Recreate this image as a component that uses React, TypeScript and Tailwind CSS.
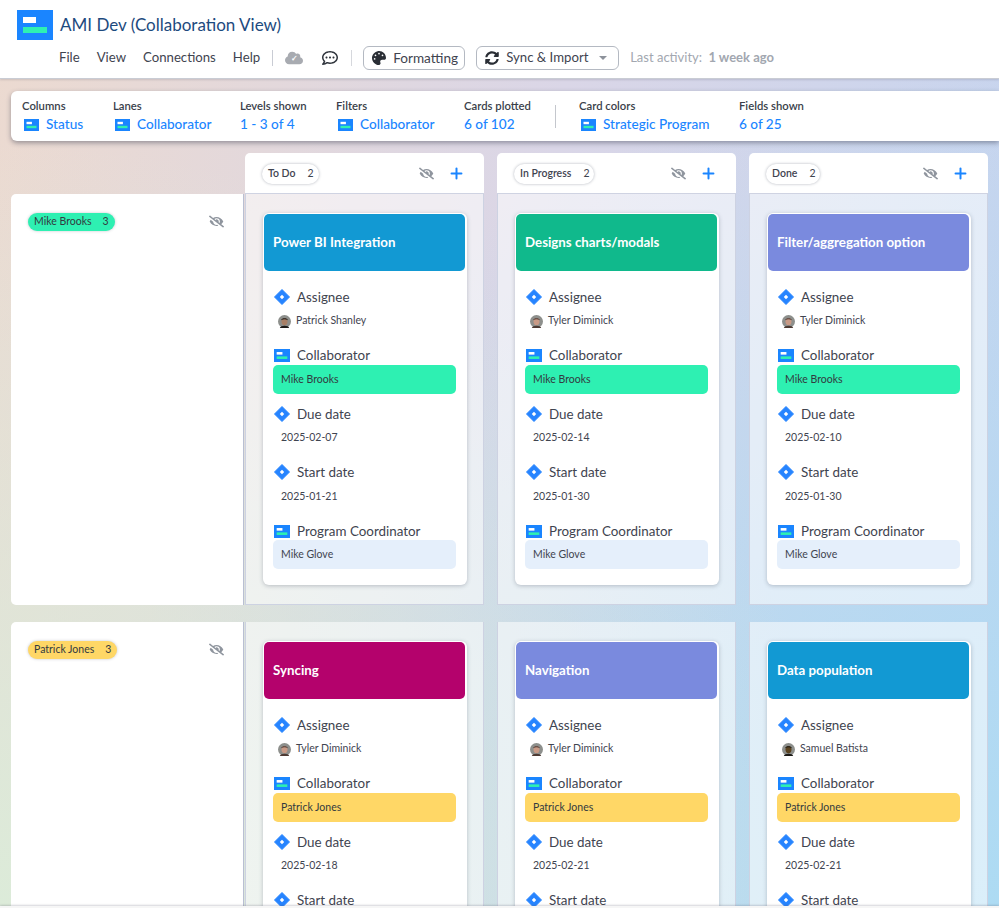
import { Plus } from "lucide-react";
import { FaPalette, FaSyncAlt, FaRegCommentDots, FaCloud, FaEyeSlash } from "react-icons/fa";

// ─── icons ───────────────────────────────────────────────

function BoardIcon({ className }: { className: string }) {
  return (
    <svg className={className} viewBox="0 0 36 30" preserveAspectRatio="none">
      <rect width="36" height="30" fill="#1a85ff" />
      <rect x="6" y="7" width="13" height="6" fill="#fff" />
      <rect x="6" y="17" width="24" height="6" fill="#2ef0b2" />
    </svg>
  );
}

function Diamond() {
  return (
    <svg className="w-[16px] h-[16px] shrink-0" viewBox="0 0 16 16">
      <path d="M8 0.5 15.5 8 8 15.5 0.5 8Z" fill="#2684ff" stroke="#2684ff" strokeLinejoin="round" />
      <path d="M8 5.8 10.2 8 8 10.2 5.8 8Z" fill="#fff" />
    </svg>
  );
}

function Avatar({ skin, hair }: { skin: string; hair: string }) {
  return (
    <svg className="w-[13px] h-[13px] shrink-0" viewBox="0 0 13 13">
      <circle cx="6.5" cy="6.5" r="6.5" fill="#8d8f8c" />
      <ellipse cx="6.5" cy="6.6" rx="3" ry="3.6" fill={skin} />
      <path d="M3.2 5.2C3.4 2.6 9.6 2.6 9.8 5.2 8 4 5 4 3.2 5.2Z" fill={hair} />
      <path d="M1.8 13C2.5 10 10.5 10 11.2 13Z" fill={hair} />
    </svg>
  );
}

// ─── data ────────────────────────────────────────────────

interface CardData {
  title: string;
  color: string;
  assignee: string;
  skin: string;
  hair: string;
  due: string;
  start: string;
}

const tyler = { assignee: "Tyler Diminick", skin: "#c99a86", hair: "#4d3a33" };
const patrick = { assignee: "Patrick Shanley", skin: "#a87f66", hair: "#1d1a18" };
const samuel = { assignee: "Samuel Batista", skin: "#5b4320", hair: "#1c1a16" };

const lanes: { name: string; pill: string; cards: CardData[] }[] = [
  {
    name: "Mike Brooks",
    pill: "bg-[#2ef0b2]",
    cards: [
      { title: "Power BI Integration", color: "bg-[#1299d3]", ...patrick, due: "2025-02-07", start: "2025-01-21" },
      { title: "Designs charts/modals", color: "bg-[#10b98c]", ...tyler, due: "2025-02-14", start: "2025-01-30" },
      { title: "Filter/aggregation option", color: "bg-[#7a8ade]", ...tyler, due: "2025-02-10", start: "2025-01-30" },
    ],
  },
  {
    name: "Patrick Jones",
    pill: "bg-[#ffd766]",
    cards: [
      { title: "Syncing", color: "bg-[#b4026c]", ...tyler, due: "2025-02-18", start: "2025-01-30" },
      { title: "Navigation", color: "bg-[#7a8ade]", ...tyler, due: "2025-02-21", start: "2025-01-30" },
      { title: "Data population", color: "bg-[#1299d3]", ...samuel, due: "2025-02-21", start: "2025-01-30" },
    ],
  },
];

const columns = ["To Do", "In Progress", "Done"];

// ─── card ────────────────────────────────────────────────

function Label({ text, board }: { text: string; board?: boolean }) {
  return (
    <div className="flex items-center h-[20px] gap-[7px] pl-[1px] text-[13.4px] text-[#3f4450]">
      {board ? <BoardIcon className="w-[16px] h-[13px] shrink-0" /> : <Diamond />}
      <span>{text}</span>
    </div>
  );
}

function Card({ card, lane, pill }: { card: CardData; lane: string; pill: string }) {
  return (
    <div className="w-[204px] rounded-[6px] bg-white pt-[1px] pl-[1px] shadow-[0_1px_4px_rgba(60,70,90,0.3)]">
      <div className={`${card.color} h-[57px] w-[201px] rounded-[5px] flex items-center pl-[9px] text-[13.3px] font-bold text-white`}>
        {card.title}
      </div>
      <div className="pt-[16px] pb-[16px] pl-[9px] pr-[11px] flex flex-col gap-[10px]">
        <div>
          <Label text="Assignee" />
          <div className="flex items-center h-[28px] gap-[5px] pl-[5px] text-[10.5px] text-[#3f4450]">
            <Avatar skin={card.skin} hair={card.hair} />
            <span>{card.assignee}</span>
          </div>
        </div>
        <div>
          <Label text="Collaborator" board />
          <div className={`${pill} flex items-center h-[29px] rounded-[5px] pl-[8px] text-[10.5px] text-[#333a40]`}>{lane}</div>
        </div>
        <div>
          <Label text="Due date" />
          <div className="flex items-center h-[28px] pl-[8px] text-[10.5px] text-[#3f4450]">{card.due}</div>
        </div>
        <div>
          <Label text="Start date" />
          <div className="flex items-center h-[29px] pl-[8px] text-[10.5px] text-[#3f4450]">{card.start}</div>
        </div>
        <div>
          <Label text="Program Coordinator" board />
          <div className="-mt-[1px] flex items-center h-[29px] rounded-[5px] pl-[8px] bg-[#e5effb] text-[10.5px] text-[#3f4450]">Mike Glove</div>
        </div>
      </div>
    </div>
  );
}

// ─── toolbar item ────────────────────────────────────────

function Stat({ label, value, board, width }: { label: string; value: string; board?: boolean; width: string }) {
  return (
    <div className={`${width} shrink-0`}>
      <div className="text-[11.3px] font-semibold leading-[15px] text-[#3a3f4a]">{label}</div>
      <div className="flex items-center h-[20px] mt-[2px] gap-[7px] text-[13.6px] font-medium text-[#1a85ff]">
        {board && <BoardIcon className="ml-[2px] w-[15px] h-[12px] shrink-0" />}
        <span>{value}</span>
      </div>
    </div>
  );
}

export default function App() {
  return (
    <div
      className="relative h-[908px] w-[999px] overflow-hidden bg-[radial-gradient(ellipse_at_0%_100%,#dcebd9,transparent_60%),radial-gradient(ellipse_at_100%_100%,#addbf3,transparent_65%),linear-gradient(100deg,#ecdad0,#dad6e7_50%,#c3d4f0)] font-['Lato','Noto_Sans',sans-serif]"
    >
      <header className="h-[79px] bg-white border-b border-[#c9ccd4] shadow-[0_1px_2px_rgba(80,80,100,0.2)]">
        <div className="flex items-center pl-[17px] pt-[10px] gap-[7px]">
          <BoardIcon className="w-[36px] h-[30px]" />
          <h1 className="text-[17px] leading-[30px] text-[#1d4a7e]">AMI Dev (Collaboration View)</h1>
        </div>
        <div className="flex items-center h-[24px] mt-[6px] pl-[59px] text-[13.2px] text-[#3f4450] whitespace-nowrap">
          <span>File</span>
          <span className="ml-[17px]">View</span>
          <span className="ml-[17px]">Connections</span>
          <span className="ml-[17px]">Help</span>
          <span className="ml-[12px] h-[16px] w-px bg-[#c9ccd4]" />
          <span className="relative ml-[12px] flex items-center">
            <FaCloud className="text-[18px] text-[#a8abb1]" />
            <span className="absolute left-[6px] top-[5px] text-[8px] leading-[8px] font-bold text-white">✓</span>
          </span>
          <FaRegCommentDots className="ml-[19px] text-[16px] text-[#2f343c]" />
          <span className="ml-[13px] h-[16px] w-px bg-[#d6d8dd]" />
          <div className="ml-[11px] flex items-center h-[24px] w-[102px] shrink-0 rounded-[6px] border border-[#b4b9c2] pl-[8px] gap-[7px]">
            <FaPalette className="text-[14px] text-[#2a2e35]" />
            <span className="text-[13.6px]">Formatting</span>
          </div>
          <div className="ml-[11px] flex items-center h-[24px] w-[143px] shrink-0 rounded-[6px] border border-[#b4b9c2] pl-[8px] gap-[7px]">
            <FaSyncAlt className="text-[14px] text-[#2a2e35]" />
            <span>Sync &amp; Import</span>
            <span className="ml-[4px] h-0 w-0 border-x-[4px] border-t-[4px] border-x-transparent border-t-[#8d929b]" />
          </div>
          <span className="ml-[11px] text-[13px] text-[#a2a7b0]">
            Last activity: <b className="ml-[3px] font-bold">1 week ago</b>
          </span>
        </div>
      </header>

      <main className="pt-[12px] pl-[11px]">
        <section className="flex h-[50px] items-center rounded-l-[6px] bg-white pl-[11px] shadow-[0_2px_5px_rgba(50,55,75,0.45)]">
          <Stat width="w-[91px]" label="Columns" value="Status" board />
          <Stat width="w-[127px]" label="Lanes" value="Collaborator" board />
          <Stat width="w-[96px]" label="Levels shown" value="1 - 3 of 4" />
          <Stat width="w-[128px]" label="Filters" value="Collaborator" board />
          <Stat width="w-[91px]" label="Cards plotted" value="6 of 102" />
          <span className="h-[23px] w-px shrink-0 bg-[#c4c7cd]" />
          <div className="w-[23px] shrink-0" />
          <Stat width="w-[160px]" label="Card colors" value="Strategic Program" board />
          <Stat width="w-[90px]" label="Fields shown" value="6 of 25" />
        </section>

        <div className="mt-[12px] ml-[234px] flex gap-[13px]">
          {columns.map((col) => (
            <div
              key={col}
              className="flex h-[41px] w-[239px] items-center justify-between rounded-t-[5px] bg-white pt-[1px] pl-[17px] pr-[19px] border-b border-[#cfd3e2]"
            >
              <div className="flex h-[20px] items-center gap-[12px] rounded-full bg-white pl-[6px] pr-[5px] text-[10.5px] font-semibold text-[#3f4450] shadow-[0_0_3px_rgba(60,70,90,0.4)]">
                <span>{col}</span>
                <span className="font-normal">2</span>
              </div>
              <div className="flex items-center gap-[14px]">
                <FaEyeSlash className="text-[15px] text-[#8f959e]" />
                <Plus className="w-[17px] h-[17px] text-[#1a85ff]" strokeWidth={2.8} />
              </div>
            </div>
          ))}
        </div>

        <div className="flex flex-col gap-[17px]">
          {lanes.map((lane) => (
            <div key={lane.name} className="flex h-[411px] shrink-0">
              <div className="flex w-[233px] items-start justify-between rounded-l-[5px] bg-white pl-[17px] pr-[19px] pt-[18px] border-r border-[#b9bfd2]">
                <div className={`${lane.pill} mt-[1px] flex h-[18px] items-center gap-[11px] rounded-full px-[6px] text-[10.5px] text-[#333a40] shadow-[0_0_3px_rgba(60,70,90,0.3)]`}>
                  <span>{lane.name}</span>
                  <span>3</span>
                </div>
                <FaEyeSlash className="mt-[2px] text-[15px] text-[#8f959e]" />
              </div>
              <div className="ml-[1px] flex gap-[13px]">
                {lane.cards.map((card) => (
                  <div key={card.title} className="w-[239px] bg-white/55 pl-[17px] pt-[19px] border-x border-b border-[#cdd2e2]">
                    <Card card={card} lane={lane.name} pill={lane.pill} />
                  </div>
                ))}
              </div>
            </div>
          ))}
        </div>
      </main>

      {/* strip along the bottom edge */}
      <div className="absolute bottom-0 left-0 h-[2px] w-full bg-[#f6f6f6] shadow-[0_-1px_2px_rgba(80,80,100,0.25)]" />
    </div>
  );
}
